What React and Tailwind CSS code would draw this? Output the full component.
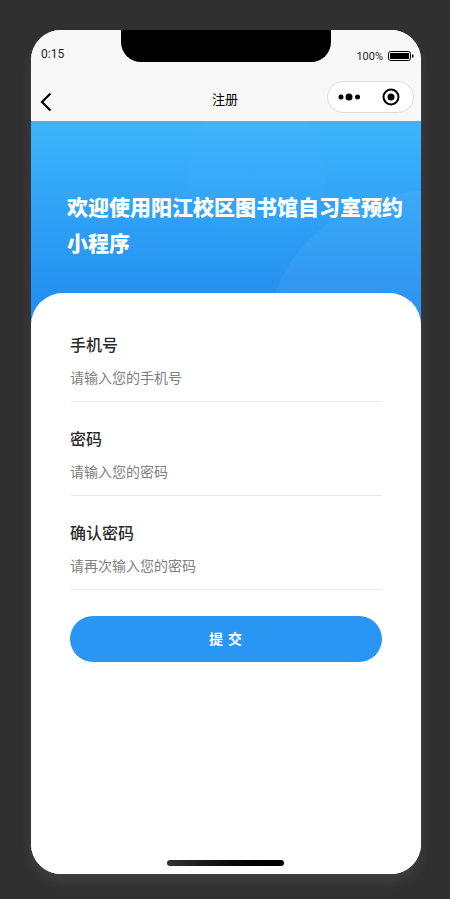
const cjk = "font-['Microsoft_YaHei','Noto_Sans_CJK_SC','Liberation_Sans',sans-serif]";

const fields = [
    { label: "手机号", placeholder: "请输入您的手机号" },
    { label: "密码", placeholder: "请输入您的密码" },
    { label: "确认密码", placeholder: "请再次输入您的密码" },
];

function Battery() {
    return (
        <svg width="26" height="10" viewBox="0 0 26 10">
            <rect x="0.5" y="0.5" width="22" height="9" rx="2" fill="none" stroke="#000" />
            <rect x="2" y="2" width="19" height="6" rx="0.5" fill="#000" />
            <rect x="24" y="3.5" width="1.5" height="3" rx="0.5" fill="#000" />
        </svg>
    );
}

function Capsule() {
    return (
        <div className="w-[87px] h-[32px] rounded-full bg-white border border-[#dedede] flex items-center justify-between pl-[10px] pr-[13px] mb-[1px]">
            <svg width="24" height="8" viewBox="0 0 24 8">
                <circle cx="3" cy="4" r="2.5" fill="#000" />
                <circle cx="11" cy="4" r="3.5" fill="#000" />
                <circle cx="19.5" cy="4" r="2.5" fill="#000" />
            </svg>
            <svg width="18" height="18" viewBox="0 0 18 18">
                <circle cx="9" cy="9" r="7.5" fill="none" stroke="#000" strokeWidth="2" />
                <circle cx="9" cy="9" r="3.5" fill="#000" />
            </svg>
        </div>
    );
}

function FieldBody({ field }) {
    return (
        <div className="h-full flex flex-col justify-end border-b border-[#e9e9e9]">
            <p className="text-[16px] leading-[24px] font-medium text-[#2b2b2b]">{field.label}</p>
            <p className="mt-[11px] mb-[14px] text-[14px] leading-[20px] text-[#808080]">{field.placeholder}</p>
        </div>
    );
}

export default function App() {
    return (
        <div className={`w-[450px] h-[899px] bg-[#303030] pt-[30px] pl-[31px] overflow-hidden ${cjk}`}>
            <div className="relative w-[390px] h-[844px] rounded-[30px] bg-white overflow-hidden shadow-[0_8px_14px_rgba(255,255,255,0.08)] flex flex-col">
                {/* Notch */}
                <div className="absolute top-0 left-[90px] w-[210px] h-[32px] bg-black rounded-b-[20px]"></div>

                {/* Status bar */}
                <div className="h-[44px] bg-[#f8f8f8] flex justify-between items-start pl-[10px] pr-[7px] pt-[17px] text-[12px] leading-[14px] text-[#222]">
                    <span className="font-['Roboto','Liberation_Sans',sans-serif]">0:15</span>
                    <div className="flex items-center gap-[5px] pt-[1px]">
                        <span className="text-[11px] pt-[2px] font-['Roboto','Liberation_Sans',sans-serif]">100%</span>
                        <Battery />
                    </div>
                </div>

                {/* Nav */}
                <div className="relative h-[47px] bg-[#f8f8f8] flex items-center justify-between pl-[9px] pr-[7px]">
                    <svg className="mt-[8px]" width="12" height="20" viewBox="0 0 12 20">
                        <path d="M10.5 1.5 L2 10 L10.5 18.5" fill="none" stroke="#000" strokeWidth="2.2" />
                    </svg>
                    <span className="text-[13px] text-black absolute left-0 right-[2px] text-center pointer-events-none pt-[3px]">注册</span>
                    <Capsule />
                </div>

                {/* Banner */}
                <div className="relative h-[212px] shrink-0 overflow-hidden bg-gradient-to-b from-[#3db5fb] to-[#2490f1] to-[82%] pl-[36px] pr-[16px] pt-[67px]">
                    <svg className="absolute left-0 top-0" width="390" height="212" viewBox="0 0 390 212">
                        <circle cx="225" cy="50" r="70" fill="#fff" opacity="0.01" />
                        <path d="M244 172 C262 120 320 72 390 70 L390 212 L244 212 Z" fill="#fff" opacity="0.05" />
                    </svg>
                    <h1 className="relative text-[21px] leading-[36px] font-black text-white">
                        欢迎使用阳江校区图书馆自习室预约小程序
                    </h1>
                </div>

                {/* Form card */}
                <div className="relative -mt-[40px] flex-1 bg-white rounded-t-[32px] px-[39px] pt-[40px]">
                    {fields.map((field) => (
                        <div key={field.label} className="h-[94px] first:h-[69px]">
                            <FieldBody field={field} />
                        </div>
                    ))}
                    <button className="mt-[26px] w-full h-[46px] rounded-full bg-[#2a96f3] text-white text-[14px] font-bold tracking-[1px] pb-[2px]">
                        提 交
                    </button>
                </div>

                {/* Home indicator */}
                <div className="absolute bottom-[8px] left-[136px] w-[117px] h-[6px] rounded-full bg-gradient-to-r from-[#333] to-black"></div>
            </div>
        </div>
    );
}
